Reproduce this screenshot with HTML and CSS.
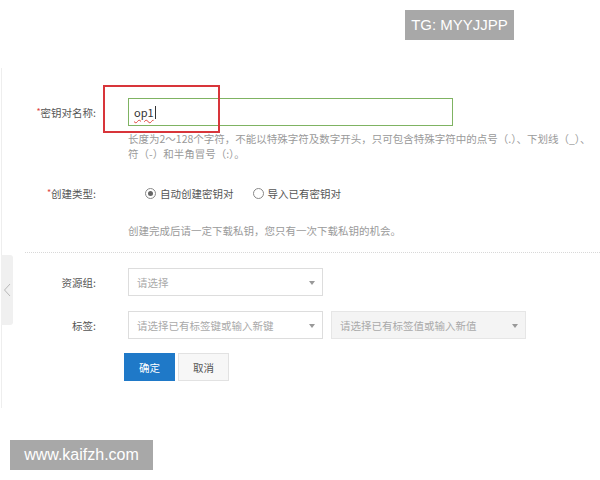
FILE: index.html
```html
<!DOCTYPE html>
<html lang="zh-CN">
<head>
    <meta charset="UTF-8">
    <title>创建密钥对</title>
    <link rel="stylesheet" href="styles.css">
</head>
<body>
  <div class="badge badge-tg">TG: MYYJJPP</div>

  <div class="panel">
    <div class="side-tab">
      <svg width="8" height="14" viewBox="0 0 8 14"><path d="M7 1 L1.5 7 L7 13" fill="none" stroke="#b8b8b8" stroke-width="1"/></svg>
    </div>

    <div class="row">
      <label class="label"><i>*</i>密钥对名称:</label>
      <div class="field">
        <div class="input active"><span class="typed">op1</span><span class="caret"></span></div>
      </div>
      <div class="mark"></div>
    </div>
    <div class="help">
      <p>长度为2～128个字符，不能以特殊字符及数字开头，只可包含特殊字符中的点号（.）、下划线（_）、</p>
      <p>符（-）和半角冒号（:）。</p>
    </div>

    <div class="row row-radio">
      <label class="label"><i>*</i>创建类型:</label>
      <div class="field radios">
        <span class="radio checked"></span><span class="radio-text">自动创建密钥对</span>
        <span class="radio"></span><span class="radio-text">导入已有密钥对</span>
      </div>
    </div>
    <p class="note">创建完成后请一定下载私钥，您只有一次下载私钥的机会。</p>

    <div class="divider"></div>

    <div class="row row-group">
      <label class="label">资源组:</label>
      <div class="field">
        <div class="select">请选择<span class="arrow"></span></div>
      </div>
    </div>

    <div class="row row-tag">
      <label class="label">标签:</label>
      <div class="field">
        <div class="select">请选择已有标签键或输入新键<span class="arrow"></span></div>
        <div class="select disabled">请选择已有标签值或输入新值<span class="arrow"></span></div>
      </div>
    </div>

    <div class="buttons">
      <button class="btn btn-primary">确定</button>
      <button class="btn">取消</button>
    </div>
  </div>

  <div class="badge badge-site">www.kaifzh.com</div>
</body>
</html>
```

FILE: styles.css
```css
html {
    background: #fff;
}
body {
    margin: 0;
    width: 600px;
    height: 480px;
    overflow: hidden;
    position: relative;
    font-family: "Noto Sans CJK SC", "Liberation Sans", sans-serif;
    font-size: 10.5px;
    color: #555;
}

.badge {
    position: absolute;
    height: 30px;
    line-height: 30px;
    background: #a8a8a8;
    color: #fff;
    font-family: "Liberation Sans", sans-serif;
    text-align: center;
}
.badge-tg {
    left: 405px;
    top: 10px;
    width: 109px;
    font-size: 15px;
}
.badge-site {
    left: 10px;
    top: 440px;
    width: 143px;
    font-size: 16px;
}

.panel {
    position: relative;
    margin-top: 68px;
    margin-left: 1px;
    height: 340px;
    padding-top: 30px;
    box-sizing: border-box;
    border-left: 1px solid #eee;
}

.side-tab {
    position: absolute;
    left: -1px;
    top: 187px;
    width: 12px;
    height: 70px;
    background: #f0f0f0;
    border-radius: 0 3px 3px 0;
    display: flex;
    align-items: center;
    justify-content: center;
}

.row {
    display: flex;
    align-items: center;
    position: relative;
}
.label {
    width: 94px;
    text-align: right;
    color: #555;
    flex-shrink: 0;
}
.label i {
    color: #e0463e;
    font-style: normal;
    font-size: 9px;
    vertical-align: 2px;
}
.field {
    margin-left: 32px;
    display: flex;
    gap: 8px;
}

.input {
    width: 325px;
    height: 28px;
    box-sizing: border-box;
    border: 1px solid #7fb362;
    padding: 0 5px;
    display: flex;
    align-items: center;
    color: #333;
    font-size: 11px;
}
.typed {
    text-decoration: underline wavy #e0463e;
    text-decoration-thickness: 1px;
    text-underline-offset: 2px;
}
.caret {
    display: inline-block;
    width: 1px;
    height: 13px;
    background: #333;
    margin-left: 1px;
}
.mark {
    position: absolute;
    left: 101px;
    top: -13px;
    width: 117px;
    height: 48px;
    border: 2px solid #d8353a;
    box-sizing: border-box;
}

.help {
    margin: 5px 0 0 126px;
    color: #9a9a9a;
    white-space: nowrap;
}
.help p {
    margin: 0;
    line-height: 15px;
}

.row-radio {
    margin-top: 22px;
    height: 20px;
}
.radios {
    margin-left: 49px;
    align-items: center;
    gap: 0;
}
.radio {
    width: 11px;
    height: 11px;
    box-sizing: border-box;
    border: 1px solid #888;
    border-radius: 50%;
    position: relative;
    margin-right: 4px;
}
.radio.checked::after {
    content: "";
    position: absolute;
    left: 2px;
    top: 2px;
    width: 5px;
    height: 5px;
    border-radius: 50%;
    background: #666;
}
.radio-text {
    margin-right: 19px;
}

.note {
    margin: 20px 0 0 126px;
    line-height: 16px;
    color: #9a9a9a;
}

.divider {
    margin: 13px 0 0 23px;
    border-top: 1px dotted #d8d8d8;
}

.select {
    width: 195px;
    height: 28px;
    box-sizing: border-box;
    border: 1px solid #ddd;
    padding: 0 8px;
    display: flex;
    align-items: center;
    color: #aaa;
    position: relative;
}
.select.disabled {
    background: #f4f4f4;
    border-color: #e6e6e6;
}
.arrow {
    position: absolute;
    right: 7px;
    top: 12px;
    border-left: 3px solid transparent;
    border-right: 3px solid transparent;
    border-top: 4px solid #999;
}
.row-group {
    margin-top: 15px;
}
.row-tag {
    margin-top: 15px;
}

.buttons {
    margin: 14px 0 0 122px;
    display: flex;
    gap: 3px;
}
.btn {
    width: 51px;
    height: 28px;
    border: 1px solid #e2e2e2;
    background: #f7f7f7;
    color: #555;
    font-family: inherit;
    font-size: 10.5px;
    padding: 0;
}
.btn-primary {
    background: #1f79c8;
    border-color: #1f79c8;
    color: #fff;
}
```
